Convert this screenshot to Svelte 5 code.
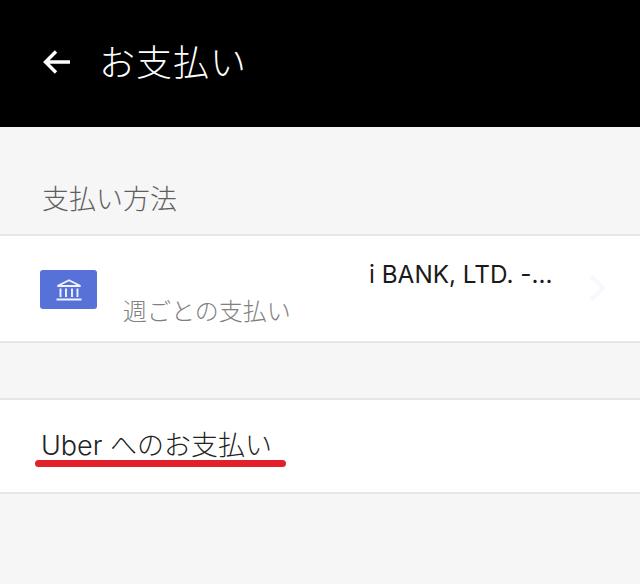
<script lang="ts">
	const sectionLabel = '支払い方法';
	const account = 'i BANK, LTD. -...';
	const schedule = '週ごとの支払い';
</script>

<div class="screen">
	<header class="bar">
		<svg class="back" viewBox="0 0 30 30" width="30" height="30" aria-hidden="true">
			<path d="M28 15H4M14 4.5 3.5 15 14 25.5" fill="none" stroke="#fff" stroke-width="3.4" />
		</svg>
		<h1>お支払い</h1>
	</header>

	<h2 class="section-label">{sectionLabel}</h2>

	<section class="row method">
		<div class="bank">
			<svg viewBox="0 0 28 24" width="28" height="24" aria-hidden="true">
				<g fill="none" stroke="#f0f3ff" stroke-width="1.9">
					<path d="M2.5 8 14 2.2 25.5 8Z" />
					<path d="M5.5 10.5V19M11 10.5V19M17 10.5V19M22.5 10.5V19" />
					<path d="M1.5 21.5h25" stroke-width="2" />
				</g>
			</svg>
		</div>
		<div class="method-text">
			<span class="account">{account}</span>
			<span class="schedule">{schedule}</span>
		</div>
		<svg class="chevron" viewBox="0 0 20 30" width="20" height="30" aria-hidden="true">
			<path d="M3 3 15 15 3 27" fill="none" stroke="#f6f7ff" stroke-width="4" />
		</svg>
	</section>

	<section class="row uber">
		<div class="uber-label">
			<span>Uber へのお支払い</span>
			<div class="underline"></div>
		</div>
	</section>
</div>

<style>
	:global(body) {
		margin: 0;
		background: #f6f6f6;
	}

	.screen {
		height: 584px;
		overflow: hidden;
		background: #f6f6f6;
		font-family: Inter, 'Noto Sans CJK JP', sans-serif;
	}

	.bar {
		height: 127px;
		box-sizing: border-box;
		background: #000;
		display: flex;
		align-items: center;
		padding: 0 0 4px 42px;
		gap: 27px;
	}

	.back {
		flex: none;
	}

	h1 {
		margin: 0 0 3px;
		color: #fff;
		font-size: 36px;
		font-weight: 300;
		letter-spacing: 1px;
	}

	.section-label {
		margin: 0;
		height: 107px;
		box-sizing: border-box;
		padding: 55px 0 0 42px;
		color: #5e5e5e;
		font-size: 27px;
		line-height: 36px;
		font-weight: 300;
	}

	.row {
		background: #fff;
		border-top: 2px solid #e6e6e6;
		border-bottom: 2px solid #e6e6e6;
		box-sizing: border-box;
	}

	.method {
		height: 109px;
		display: flex;
		align-items: center;
		padding: 0 32px 0 40px;
	}

	.bank {
		width: 57px;
		height: 39px;
		margin-top: 2px;
		flex: none;
		background: #5672d9;
		border-radius: 3px;
		display: flex;
		align-items: center;
		justify-content: center;
	}

	.method-text {
		flex: 1;
		display: flex;
		flex-direction: column;
		padding-left: 26px;
		margin-top: 9px;
	}

	.account {
		padding-left: 246px;
		color: #1a1a1a;
		font-size: 24.3px;
		line-height: 36px;
		white-space: nowrap;
	}

	.schedule {
		color: #808080;
		font-size: 24px;
		font-weight: 300;
		line-height: 36px;
		margin-top: 2px;
	}

	.chevron {
		flex: none;
		margin-bottom: 2px;
	}

	.uber {
		height: 96px;
		margin-top: 55px;
		padding: 28px 0 0 35px;
	}

	.uber-label {
		display: inline-flex;
		flex-direction: column;
		width: 251px;
	}

	.uber-label span {
		padding-left: 6px;
		color: #222;
		font-size: 27px;
		font-weight: 300;
		line-height: 36px;
		white-space: nowrap;
	}

	.underline {
		height: 7px;
		margin-top: -4px;
		background: #e2202c;
		border-radius: 4px;
	}
</style>
